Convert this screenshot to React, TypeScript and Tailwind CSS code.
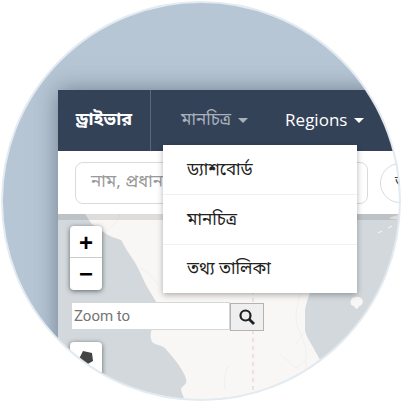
const bn = "font-['Noto_Sans_Bengali','Noto_Sans','Liberation_Sans',sans-serif]";
const items = ["ড্যাশবোর্ড", "মানচিত্র", "তথ্য তালিকা"];

function Caret({ className }: { className: string }) {
  return <span className={`ml-[7px] inline-block border-x-[5px] border-t-[5px] border-x-transparent ${className}`} />;
}

function MapLand() {
  return (
    <svg viewBox="0 0 344 188" className="absolute inset-0 h-full w-full">
      <path
        d="M27 0L33 9C38 14 42 17 47 19C50 22 58 24 63 26C66 30 67 34 70 38C74 44 77 48 80 54L88 71L100 91L93 118C92 122 93 127 95 129C99 131 103 131 107 134C110 138 114 142 117 146C120 150 123 154 125 158C127 162 129 165 128 169C126 172 123 173 123 176C124 180 126 183 127 188H300L262 146C260 142 257 137 255 133C252 128 248 122 247 116V96C248 90 250 84 252 79L240 0Z"
        fill="#f8f7f5"
      />
      <path d="M293 86C295 82 301 82 304 85C306 88 304 92 301 92C300 96 297 95 296 92C293 92 292 89 293 86Z" fill="#f8f7f5" />
      <path d="M320 19L324 17M330 14L334 12M332 4L344 0V6Z" fill="#f8f7f5" stroke="#f8f7f5" />
      <path d="M195 60V188" fill="none" stroke="#e8c6ca" strokeWidth="1" strokeDasharray="4 4" />
      <path d="M155 14L160 10M156 18L163 22" fill="none" stroke="#ecd3d6" strokeWidth="1" />
      <path
        d="M242 79C240 90 238 96 238 106C240 118 246 124 248 136V154M222 140L238 154L248 146M246 118L238 130M47 19C54 12 60 8 62 0M82 54C90 58 96 62 100 72M168 176C164 170 168 158 170 152"
        fill="none"
        stroke="#f1efed"
        strokeWidth="1"
      />
      <rect width="344" height="6" fill="#000" opacity="0.1" />
    </svg>
  );
}

export default function App() {
  return (
    <div className="h-[402px] w-[402px] overflow-hidden bg-white">
      <div className="ml-px mt-px h-[400px] w-[400px] overflow-hidden rounded-full border-2 border-[#e3ebf2] bg-[#b7c6d4] pl-[55px] pt-[87px]">
        <div className={`h-[400px] w-[500px] bg-white shadow-[0_0_22px_rgba(52,66,88,0.55)] ${bn}`}>
          <div className="flex h-[61px] items-center bg-[#344258]">
            <div className="flex h-full w-[93px] items-center justify-center border-r border-[#5b687c] text-[18px] font-bold text-white">
              ড্রাইভার
            </div>
            <div className="ml-[30px] flex items-center text-[17px] text-[#a9b1bd]">
              মানচিত্র
              <Caret className="border-t-[#a9b1bd]" />
            </div>
            <div className="ml-[37px] flex items-center font-['Open_Sans',sans-serif] text-[17px] text-white">
              <span className="-mt-[2px]">Regions</span>
              <Caret className="border-t-white" />
            </div>
          </div>
          <div className="flex h-[63px] items-center gap-[12px] pl-[17px]">
            <div className="flex h-[42px] w-[293px] items-center overflow-hidden whitespace-nowrap rounded-lg border border-[#dadada] pl-[15px] text-[17px] text-[#999]">
              নাম, প্রধান
            </div>
            <div className="flex h-[40px] w-[40px] items-center rounded-full border border-[#dadada] pl-[14px] text-[14px] text-[#333]">
              ত
            </div>
          </div>
          <div className="relative h-[188px] w-[344px] bg-[#d2d8dc]">
            <MapLand />
            <div className="absolute left-[12px] top-[12px] w-[32px] rounded-[4px] bg-white shadow-[0_1px_5px_rgba(0,0,0,0.55)]">
              <div className="flex h-[32px] items-center justify-center border-b border-[#ccc] pt-[2px] font-['Liberation_Sans',sans-serif] text-[24px] font-bold leading-none text-black">
                +
              </div>
              <div className="flex h-[32px] items-center justify-center font-['Liberation_Sans',sans-serif] text-[24px] font-bold leading-none text-black">
                −
              </div>
            </div>
            <div className="absolute left-[13px] top-[88px] flex items-start">
              <div className="flex h-[28px] w-[159px] items-center border border-[#d5d8d8] bg-white pl-[2px] font-['Roboto',sans-serif] text-[15px] text-[#757575]">
                Zoom to
              </div>
              <div className="mt-px flex h-[28px] w-[34px] items-center justify-center border border-[#b3b3b3] bg-[#efefef]">
                <svg width="16" height="16" viewBox="0 0 16 16" fill="none" stroke="#222" strokeWidth="2.2">
                  <circle cx="6.5" cy="6.5" r="5" />
                  <path d="M10.2 10.2L15 15" strokeWidth="2.8" />
                </svg>
              </div>
            </div>
            <div className="absolute left-[12px] top-[128px] flex h-[60px] w-[32px] justify-center rounded-[4px] bg-white pt-[8px] shadow-[0_1px_5px_rgba(0,0,0,0.55)]">
              <svg width="16" height="16" viewBox="0 0 16 16" fill="#444">
                <path d="M5 1L14 3L15 11L8 15L1 9Z" />
              </svg>
            </div>
          </div>
        </div>
      </div>
      <div className={`absolute left-[163px] top-[145px] w-[194px] bg-white text-[#222] shadow-[0_2px_6px_rgba(0,0,0,0.3)] ${bn}`}>
        {items.map((item, i) => (
          <div
            key={item}
            className={`flex items-center pl-[24px] pt-[2px] text-[17px] ${i < 2 ? "h-[50px] border-b border-[#f0f0f0]" : "h-[48px]"}`}
          >
            {item}
          </div>
        ))}
      </div>
    </div>
  );
}
